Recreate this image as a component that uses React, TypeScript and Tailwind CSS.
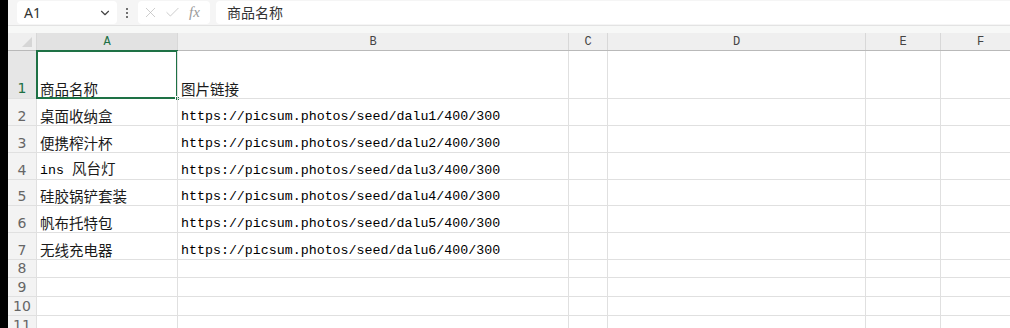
import { ChevronDown, X, Check } from 'lucide-react';

const cols = ['A', 'B', 'C', 'D', 'E', 'F'];

const colClass: Record<string, string> = {
  A: 'w-[141px]',
  B: 'w-[391px]',
  C: 'w-[39px]',
  D: 'w-[258px]',
  E: 'w-[75px]',
  F: 'w-[80px]',
};

const rows = [
  { n: 1, h: 'h-[48px]', a: '商品名称', b: '图片链接' },
  { n: 2, h: 'h-[27px]', a: '桌面收纳盒', b: 'https://picsum.photos/seed/dalu1/400/300' },
  { n: 3, h: 'h-[27px]', a: '便携榨汁杯', b: 'https://picsum.photos/seed/dalu2/400/300' },
  { n: 4, h: 'h-[27px]', a: 'ins 风台灯', b: 'https://picsum.photos/seed/dalu3/400/300' },
  { n: 5, h: 'h-[26px]', a: '硅胶锅铲套装', b: 'https://picsum.photos/seed/dalu4/400/300' },
  { n: 6, h: 'h-[27px]', a: '帆布托特包', b: 'https://picsum.photos/seed/dalu5/400/300' },
  { n: 7, h: 'h-[27px]', a: '无线充电器', b: 'https://picsum.photos/seed/dalu6/400/300' },
  { n: 8, h: 'h-[18px]', a: '', b: '' },
  { n: 9, h: 'h-[19px]', a: '', b: '' },
  { n: 10, h: 'h-[19px]', a: '', b: '' },
  { n: 11, h: 'h-[19px]', a: '', b: '' },
];

const cjk = '"Noto Sans CJK SC", sans-serif';

function CellText({ text }: { text: string }) {
  // latin runs in a monospace face, CJK a little bigger, like the sheet does
  const parts = text.split(/([\u4e00-\u9fff]+)/).filter(Boolean);
  return (
    <span className="whitespace-pre leading-none">
      {parts.map((p, i) =>
        /[\u4e00-\u9fff]/.test(p) ? (
          <span key={i} className="text-[14.5px] text-[#1a1a1a] font-['Noto_Sans_CJK_SC',sans-serif]">
            {p}
          </span>
        ) : (
          <span key={i} className="text-[13.3px] text-black font-['Liberation_Mono',monospace]">
            {p}
          </span>
        )
      )}
    </span>
  );
}

export default function App() {
  return (
    <div className="w-[1010px] h-[328px] overflow-hidden flex bg-white" style={{ fontFamily: cjk }}>
      <div className="w-[8px] shrink-0 bg-black" />
      <div className="flex-1 flex flex-col min-w-0">
        {/* formula bar */}
        <div className="h-[26px] shrink-0 flex items-center pl-[9px] bg-[#f5f5f5] border-b border-[#e3e3e3]">
          <div className="w-[100px] h-[23px] bg-white rounded-[4px] flex items-center justify-between pl-[7px] pr-[5px]">
            <span className="text-[14px] text-[#333] font-['Noto_Sans',sans-serif]">A1</span>
            <ChevronDown size={14} strokeWidth={2} className="text-[#444]" />
          </div>
          <div className="flex flex-col gap-[2px] ml-[9px] mr-[10px]">
            <span className="w-[2px] h-[2px] bg-[#444] rounded-full" />
            <span className="w-[2px] h-[2px] bg-[#444] rounded-full" />
            <span className="w-[2px] h-[2px] bg-[#444] rounded-full" />
          </div>
          <div className="w-[72px] h-[23px] bg-white rounded-[4px] flex items-center gap-[5px] px-[4px]">
            <X size={17} strokeWidth={1} className="text-[#b8b8b8]" />
            <Check size={17} strokeWidth={1} className="text-[#b8b8b8]" />
            <span className="text-[15px] italic text-[#9a9a9a] font-['Liberation_Serif',serif] ml-[3px]">fx</span>
          </div>
          <div className="flex-1 h-[23px] ml-[6px] bg-white rounded-l-[4px] flex items-center pl-[11px]">
            <span className="text-[14px] text-[#333]">商品名称</span>
          </div>
        </div>
        <div className="h-[7px] shrink-0 bg-[#f7f8f7]" />
        {/* column headers */}
        <div className="h-[18px] shrink-0 flex bg-[#efefef] border-b border-[#b9b9b9]">
          <div className="w-[28px] shrink-0 relative">
            <div className="absolute right-[4px] bottom-[3px] w-0 h-0 border-l-[10px] border-l-transparent border-b-[10px] border-b-[#d6d6d6]" />
          </div>
          {cols.map((c) => (
            <div
              key={c}
              className={`${colClass[c]} shrink-0 flex items-center justify-center border-l border-[#d8d8d8] text-[12px] font-['Liberation_Mono',monospace] ${
                c === 'A' ? 'bg-[#e2e2e2] text-[#1e7145]' : 'text-[#444]'
              }`}
            >
              {c}
            </div>
          ))}
        </div>
        {/* grid */}
        <div className="flex-1 flex flex-col">
          {rows.map((r) => (
            <div key={r.n} className={`${r.h} shrink-0 flex`}>
              <div
                className={`w-[28px] shrink-0 flex items-end justify-center pb-0 leading-none border-b border-[#e0e0e0] text-[14px] font-['DejaVu_Sans',sans-serif] ${
                  r.n === 1 ? 'text-[#1e7145] bg-[#e6e6e6] pb-[3px]' : 'text-[#666] bg-[#f3f3f3] pb-[2px]'
                }`}
              >
                {r.n}
              </div>
              {cols.map((c) => (
                <div
                  key={c}
                  className={`${colClass[c]} shrink-0 flex items-end pl-[3px] pb-[2px] border-l border-b border-[#e0e0e0] relative`}
                >
                  {c === 'A' && r.a && <CellText text={r.a} />}
                  {c === 'B' && r.b && <CellText text={r.b} />}
                  {c === 'A' && r.n === 1 && (
                    <>
                      <div className="absolute -left-[1px] -top-[1px] -right-[1px] -bottom-[1px] border-2 border-[#1e7145] pointer-events-none" />
                      <div className="absolute -right-[3px] -bottom-[3px] w-[5px] h-[5px] bg-[#1e7145] border border-white" />
                    </>
                  )}
                </div>
              ))}
            </div>
          ))}
        </div>
      </div>
    </div>
  );
}
